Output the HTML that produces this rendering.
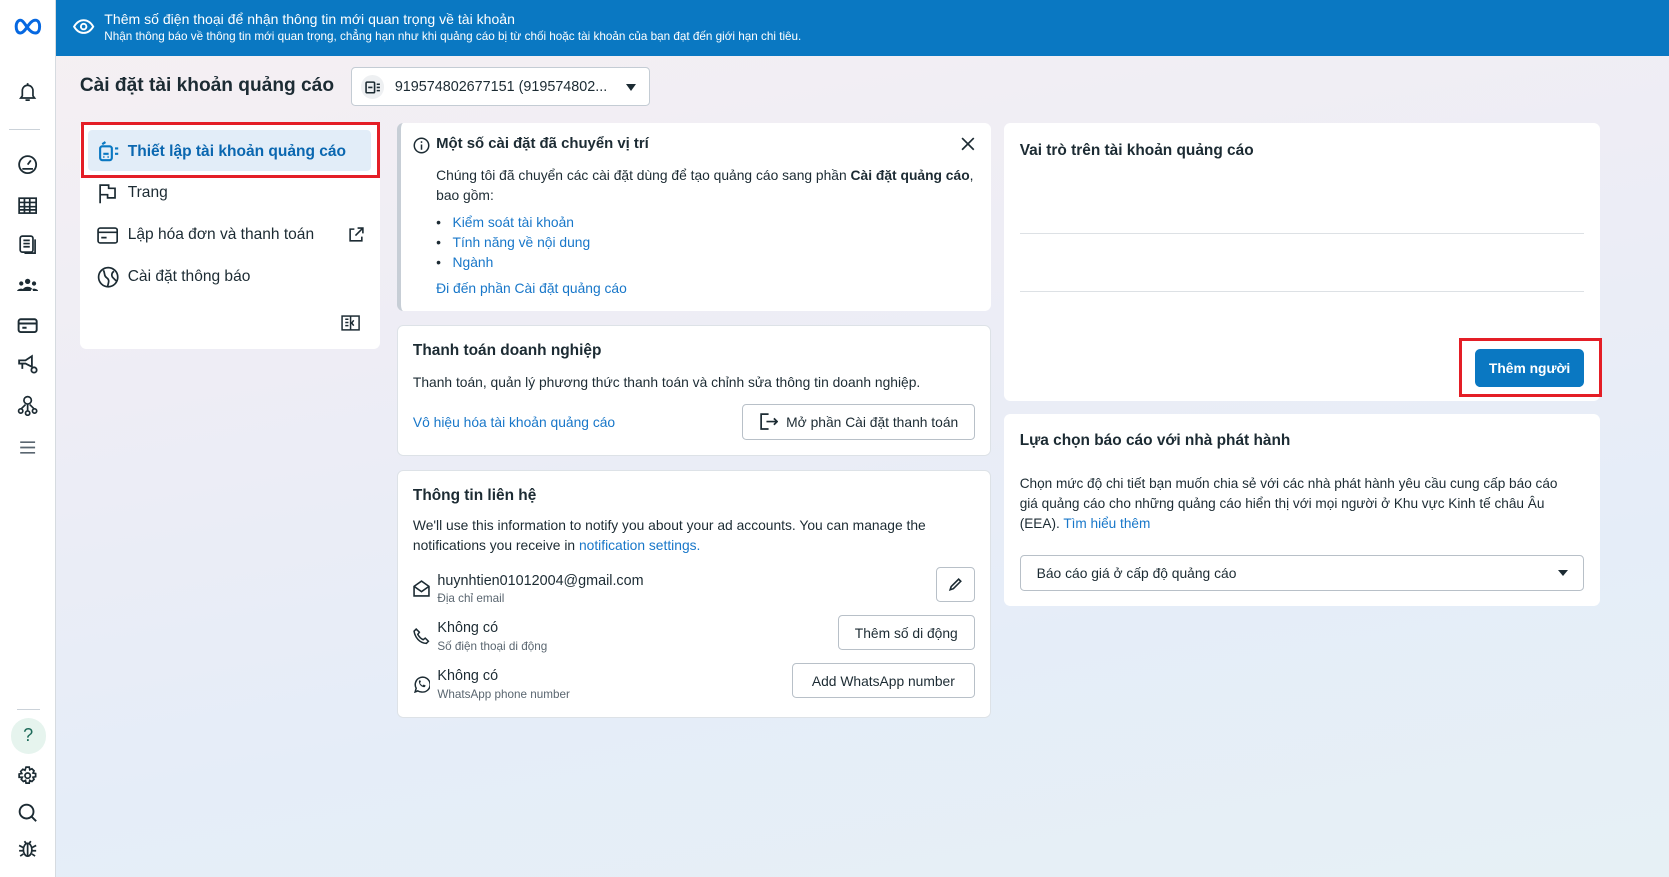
<!DOCTYPE html>
<html><head><meta charset="utf-8">
<style>
html{zoom:1.06441}
*{box-sizing:border-box;margin:0;padding:0}
body{width:1568px;height:824px;overflow:hidden;font-family:"Liberation Sans","Noto Sans CJK SC",sans-serif;color:#1c2b33;background:linear-gradient(170deg,#f6f0f2 0%,#eeedf5 35%,#e5edf8 70%,#e6f0f5 100%);position:relative;font-size:13px}
.abs{position:absolute}
.side{left:0;top:0;width:53px;height:824px;background:#fff;border-right:1px solid #d6dbe0}
.banner{left:53px;top:0;width:1515px;height:53px;background:#0a78c2;color:#fff}
.card{background:#fff;border-radius:6px;position:absolute}
.link{color:#1877c9}
.btn{position:absolute;border:1px solid #b8c0c8;border-radius:4px;background:#fff;font-size:13px;display:flex;align-items:center;justify-content:center;color:#1c2b33}
.h{font-weight:bold;font-size:14.5px}
svg{display:block}
.ic{position:absolute;left:16px}
</style></head><body>
<div class="abs side">
 <svg class="abs" style="left:12px;top:16px" width="28" height="18" viewBox="0 0 28 18"><path d="M3 9c0-4 2-6 4-6 4 0 7 12 14 12 3 0 4-3 4-6s-1-6-4-6c-6 0-9 12-14 12-3 0-4-3-4-6z" fill="none" stroke="#0668e1" stroke-width="2.8"/></svg>
 <svg class="ic" style="top:76px" width="20" height="20" viewBox="0 0 20 20" fill="none" stroke="#1c2b33" stroke-width="1.6"><path d="M5 14V9a5 5 0 0110 0v5l1.5 2h-13z M8 18h4 M10 2v2"/></svg>
 <div class="abs" style="left:8px;top:121px;width:30px;height:1px;background:#cbd2d9"></div>
 <svg class="ic" style="top:145px" width="20" height="20" viewBox="0 0 20 20" fill="none" stroke="#1c2b33" stroke-width="1.7"><circle cx="10" cy="10" r="8"/><path d="M10 10l3-4 M5 14h10"/></svg>
 <svg class="ic" style="top:183px" width="20" height="20" viewBox="0 0 20 20" fill="none" stroke="#1c2b33" stroke-width="1.6"><rect x="2" y="3" width="16" height="14"/><path d="M2 7h16M2 11h16M2 14h16M7 3v14M12 3v14"/></svg>
 <svg class="ic" style="top:220px" width="20" height="20" viewBox="0 0 20 20" fill="none" stroke="#1c2b33" stroke-width="1.6"><rect x="3" y="2" width="12" height="15" rx="2"/><path d="M6 6h6M6 9h6M6 12h6M17 5v13H7"/></svg>
 <svg class="ic" style="top:258px" width="20" height="20" viewBox="0 0 20 20" fill="#1c2b33"><circle cx="10" cy="6" r="2.5"/><circle cx="4" cy="8" r="2"/><circle cx="16" cy="8" r="2"/><path d="M5 15a5 4 0 0110 0z M0 15a4 3 0 017 -1v1z M20 15a4 3 0 00-7-1v1z"/></svg>
 <svg class="ic" style="top:296px" width="20" height="20" viewBox="0 0 20 20" fill="none" stroke="#1c2b33" stroke-width="1.8"><rect x="1.5" y="4" width="17" height="12" rx="2"/><path d="M1.5 8h17M5 12h4"/></svg>
 <svg class="ic" style="top:333px" width="22" height="20" viewBox="0 0 22 20" fill="none" stroke="#1c2b33" stroke-width="1.7"><path d="M2 6h6l6-4v10l-6-3H2z M5 9v5"/><circle cx="16" cy="15" r="2.5"/></svg>
 <svg class="ic" style="top:371px" width="20" height="20" viewBox="0 0 20 20" fill="none" stroke="#1c2b33" stroke-width="1.6"><circle cx="10" cy="5" r="3.5"/><circle cx="3.5" cy="15" r="2"/><circle cx="10" cy="17" r="2"/><circle cx="16.5" cy="15" r="2"/><path d="M10 8.5v6.5M8 9l-4 4M12 9l4 4"/></svg>
 <svg class="ic" style="top:412px" width="20" height="16" viewBox="0 0 20 16" stroke="#5a6670" stroke-width="1.6"><path d="M3 3h14M3 8h14M3 13h14"/></svg>
 <div class="abs" style="left:16px;top:666px;width:22px;height:1px;background:#cbd2d9"></div>
 <div class="abs" style="left:10px;top:675px;width:33px;height:33px;border-radius:50%;background:#e6f4ee;color:#1e6b5a;text-align:center;line-height:33px;font-size:17px">?</div>
 <svg class="ic" style="top:719px" width="20" height="20" viewBox="0 0 20 20" fill="none" stroke="#1c2b33" stroke-width="1.6"><path d="M8.5 2h3l.5 2.5 2-1 2 2-1 2 2.5.5v3l-2.5.5 1 2-2 2-2-1-.5 2.5h-3l-.5-2.5-2 1-2-2 1-2L2 11.5v-3l2.5-.5-1-2 2-2 2 1z"/><circle cx="10" cy="10" r="2.5"/></svg>
 <svg class="ic" style="top:753px" width="20" height="20" viewBox="0 0 20 20" fill="none" stroke="#1c2b33" stroke-width="1.8"><circle cx="9" cy="9" r="6.5"/><path d="M14 14l4 4"/></svg>
 <svg class="ic" style="top:787px" width="20" height="20" viewBox="0 0 20 20" fill="none" stroke="#1c2b33" stroke-width="1.6"><ellipse cx="10" cy="11" rx="4" ry="6"/><path d="M10 5v12M2 7l4 2M18 7l-4 2M2 12h4M18 12h-4M3 17l3-2M17 17l-3-2M7 3l1.5 2M13 3l-1.5 2"/></svg>
</div>
<div class="abs banner">
 <svg class="abs" style="left:16px;top:16px" width="20" height="18" viewBox="0 0 20 18" fill="none" stroke="#fff" stroke-width="1.8"><path d="M1 9c3-5 6-6 9-6s6 1 9 6c-3 5-6 6-9 6s-6-1-9-6z"/><circle cx="10" cy="9" r="2.6"/></svg>
 <div class="abs" style="left:45px;top:10px;font-size:13.2px">Thêm số điện thoại để nhận thông tin mới quan trọng về tài khoản</div>
 <div class="abs" style="left:45px;top:28px;font-size:11px">Nhận thông báo về thông tin mới quan trọng, chẳng hạn như khi quảng cáo bị từ chối hoặc tài khoản của bạn đạt đến giới hạn chi tiêu.</div>
</div>
<div class="abs" style="left:75px;top:70px;font-size:18px;font-weight:bold;color:#1c2b33">Cài đặt tài khoản quảng cáo</div>
<div class="abs" style="left:330px;top:63px;width:281px;height:37px;background:#fff;border:1px solid #c4ccd4;border-radius:4px">
 <div class="abs" style="left:8px;top:7px;width:22px;height:22px;border-radius:50%;background:#eef0f2"></div>
 <svg class="abs" style="left:12px;top:11px" width="16" height="14" viewBox="0 0 16 14" fill="none" stroke="#1c2b33" stroke-width="1.5"><rect x="1" y="2" width="8" height="10" rx="1"/><path d="M3 7h4M11 4h3M11 7h3M11 10h3"/></svg>
 <div class="abs" style="left:40px;top:10px;font-size:13.5px">919574802677151 (919574802...</div>
 <div class="abs" style="left:257px;top:15px;border-left:5px solid transparent;border-right:5px solid transparent;border-top:7px solid #1c2b33"></div>
</div>
<div class="card" style="left:75px;top:115px;width:282px;height:213px">
 <div class="abs" style="left:8px;top:7px;width:266px;height:39px;background:#e2edf8;border-radius:4px"></div>
 <div class="abs" style="left:1px;top:0;width:281px;height:52px;border:3px solid #e41e26"></div>
 <svg class="abs" style="left:17px;top:17px" width="22" height="20" viewBox="0 0 22 20" fill="none" stroke="#0a78c2" stroke-width="2"><rect x="2" y="5" width="11" height="13" rx="2"/><path d="M5 12h5M5 15h1M9 15h1M4 3l3-2M16 7h3M16 12h3"/></svg>
 <div class="abs" style="left:45px;top:19px;font-size:14.6px;font-weight:bold;color:#0a67b0">Thiết lập tài khoản quảng cáo</div>
 <svg class="abs" style="left:17px;top:57px" width="18" height="20" viewBox="0 0 18 20" fill="none" stroke="#1c2b33" stroke-width="1.6"><path d="M2 19V2h8v3h6v9H9v-3H2"/></svg>
 <div class="abs" style="left:45px;top:58px;font-size:14.6px">Trang</div>
 <svg class="abs" style="left:16px;top:98px" width="20" height="16" viewBox="0 0 20 16" fill="none" stroke="#1c2b33" stroke-width="1.6"><rect x="1" y="1" width="18" height="14" rx="2"/><path d="M1 5h18M4 10h5"/></svg>
 <div class="abs" style="left:45px;top:97px;font-size:14.6px">Lập hóa đơn và thanh toán</div>
 <svg class="abs" style="left:252px;top:98px" width="15" height="15" viewBox="0 0 15 15" fill="none" stroke="#1c2b33" stroke-width="1.5"><path d="M6 2H2v11h11V9M9 1h5v5M14 1L7 8"/></svg>
 <svg class="abs" style="left:16px;top:135px" width="21" height="21" viewBox="0 0 21 21" fill="none" stroke="#1c2b33" stroke-width="1.6"><circle cx="10.5" cy="10.5" r="9"/><path d="M6 4c2 3 0 5 3 7s2 4 1 8M16 5c-2 1-3 4-1 6s3 3 3 3"/></svg>
 <div class="abs" style="left:45px;top:137px;font-size:14.6px">Cài đặt thông báo</div>
 <svg class="abs" style="left:245px;top:181px" width="18" height="15" viewBox="0 0 18 15" fill="none" stroke="#1c2b33" stroke-width="1.4"><rect x="1" y="1" width="16" height="13"/><path d="M9 1v13M12 5l-2 2.5 2 2.5M4 4h3M4 7h3M4 10h3"/></svg>
</div>
<div class="card" style="left:373px;top:116px;width:558px;height:176px;border-left:4px solid #c7ced6">
 <svg class="abs" style="left:11px;top:13px" width="16" height="16" viewBox="0 0 16 16" fill="none" stroke="#1c2b33" stroke-width="1.4"><circle cx="8" cy="8" r="6.8"/><path d="M8 7v5M8 4v1.5"/></svg>
 <div class="abs h" style="left:33px;top:12px;font-size:14px">Một số cài đặt đã chuyển vị trí</div>
 <svg class="abs" style="left:526px;top:13px" width="13" height="13" viewBox="0 0 13 13" stroke="#1c2b33" stroke-width="1.6"><path d="M1 1l11 11M12 1L1 12"/></svg>
 <div class="abs" style="left:33px;top:39px;width:515px;line-height:19px;font-size:13px">Chúng tôi đã chuyển các cài đặt dùng để tạo quảng cáo sang phần <b>Cài đặt quảng cáo</b>, bao gồm:</div>
 <div class="abs" style="left:33px;top:83px;line-height:19px;font-size:13px">
  <div>•&nbsp;&nbsp;&nbsp;<span class="link">Kiểm soát tài khoản</span></div>
  <div>•&nbsp;&nbsp;&nbsp;<span class="link">Tính năng về nội dung</span></div>
  <div>•&nbsp;&nbsp;&nbsp;<span class="link">Ngành</span></div>
 </div>
 <div class="abs link" style="left:33px;top:147px;font-size:13px">Đi đến phần Cài đặt quảng cáo</div>
</div>
<div class="card" style="left:373px;top:305px;width:558px;height:123px;border:1px solid #dde2e7">
 <div class="abs h" style="left:14px;top:15px">Thanh toán doanh nghiệp</div>
 <div class="abs" style="left:14px;top:45px">Thanh toán, quản lý phương thức thanh toán và chỉnh sửa thông tin doanh nghiệp.</div>
 <div class="abs link" style="left:14px;top:83px">Vô hiệu hóa tài khoản quảng cáo</div>
 <div class="btn" style="left:323px;top:74px;width:219px;height:33px">
  <svg style="margin-right:8px" width="18" height="18" viewBox="0 0 18 18" fill="none" stroke="#1c2b33" stroke-width="1.6"><path d="M9 2H2v14h7M7 9h10M14 6l3 3-3 3"/></svg>Mở phần Cài đặt thanh toán</div>
</div>
<div class="card" style="left:373px;top:442px;width:558px;height:233px;border:1px solid #dde2e7">
 <div class="abs h" style="left:14px;top:15px">Thông tin liên hệ</div>
 <div class="abs" style="left:14px;top:41px;width:530px;line-height:19px">We'll use this information to notify you about your ad accounts. You can manage the notifications you receive in <span class="link">notification settings.</span></div>
 <svg class="abs" style="left:14px;top:102px" width="16" height="16" viewBox="0 0 16 16" fill="none" stroke="#1c2b33" stroke-width="1.5"><path d="M1 6l7-5 7 5v9H1z M1 6l7 5 7-5"/></svg>
 <div class="abs" style="left:37px;top:95px;font-size:13.5px">huynhtien01012004@gmail.com</div>
 <div class="abs" style="left:37px;top:113px;font-size:11px;color:#5a6670">Địa chỉ email</div>
 <div class="btn" style="left:505px;top:90px;width:37px;height:33px"><svg width="14" height="14" viewBox="0 0 14 14" fill="none" stroke="#1c2b33" stroke-width="1.5"><path d="M2 12l1-3 7-7 2 2-7 7z"/></svg></div>
 <svg class="abs" style="left:14px;top:147px" width="16" height="16" viewBox="0 0 16 16" fill="none" stroke="#1c2b33" stroke-width="1.4"><path d="M3 1l3 3-1.5 2c1 2 3 4 5 5l2-1.5 3 3-2 2C6 14 2 9 1 3z"/></svg>
 <div class="abs" style="left:37px;top:140px;font-size:13.5px">Không có</div>
 <div class="abs" style="left:37px;top:158px;font-size:11px;color:#5a6670">Số điện thoại di động</div>
 <div class="btn" style="left:413px;top:135px;width:129px;height:33px">Thêm số di động</div>
 <svg class="abs" style="left:14px;top:192px" width="16" height="16" viewBox="0 0 16 16" fill="none" stroke="#1c2b33" stroke-width="1.4"><path d="M2 15l1-3.5A7 7 0 118 15a7 7 0 01-3.5-1z"/><path d="M5.5 5c0 3 2.5 5.5 5.5 5.5l1-1.5-2-1-1 1c-1-.5-2-1.5-2.5-2.5l1-1-1-2z" fill="#1c2b33" stroke="none"/></svg>
 <div class="abs" style="left:37px;top:185px;font-size:13.5px">Không có</div>
 <div class="abs" style="left:37px;top:203px;font-size:11px;color:#5a6670">WhatsApp phone number</div>
 <div class="btn" style="left:370px;top:180px;width:172px;height:33px">Add WhatsApp number</div>
</div>
<div class="card" style="left:943px;top:116px;width:560px;height:261px">
 <div class="abs h" style="left:15px;top:17px">Vai trò trên tài khoản quảng cáo</div>
 <div class="abs" style="left:15px;top:103px;width:530px;height:1px;background:#dde1e5"></div>
 <div class="abs" style="left:15px;top:157px;width:530px;height:1px;background:#dde1e5"></div>
 <div class="abs" style="left:428px;top:202px;width:134px;height:55px;border:3px solid #e41e26"></div>
 <div class="abs" style="left:443px;top:212px;width:102px;height:36px;background:#0a78c2;border-radius:5px;color:#fff;font-weight:bold;font-size:13px;text-align:center;line-height:36px">Thêm người</div>
</div>
<div class="card" style="left:943px;top:389px;width:560px;height:180px">
 <div class="abs h" style="left:15px;top:17px">Lựa chọn báo cáo với nhà phát hành</div>
 <div class="abs" style="left:15px;top:56px;width:520px;line-height:19px;font-size:12.8px">Chọn mức độ chi tiết bạn muốn chia sẻ với các nhà phát hành yêu cầu cung cấp báo cáo giá quảng cáo cho những quảng cáo hiển thị với mọi người ở Khu vực Kinh tế châu Âu (EEA). <span class="link">Tìm hiểu thêm</span></div>
 <div class="abs" style="left:15px;top:132px;width:530px;height:34px;border:1px solid #b8c0c8;border-radius:4px">
  <div class="abs" style="left:15px;top:9px;font-size:13px">Báo cáo giá ở cấp độ quảng cáo</div>
  <div class="abs" style="left:505px;top:14px;border-left:5px solid transparent;border-right:5px solid transparent;border-top:6px solid #1c2b33"></div>
 </div>
</div>
</body></html>
